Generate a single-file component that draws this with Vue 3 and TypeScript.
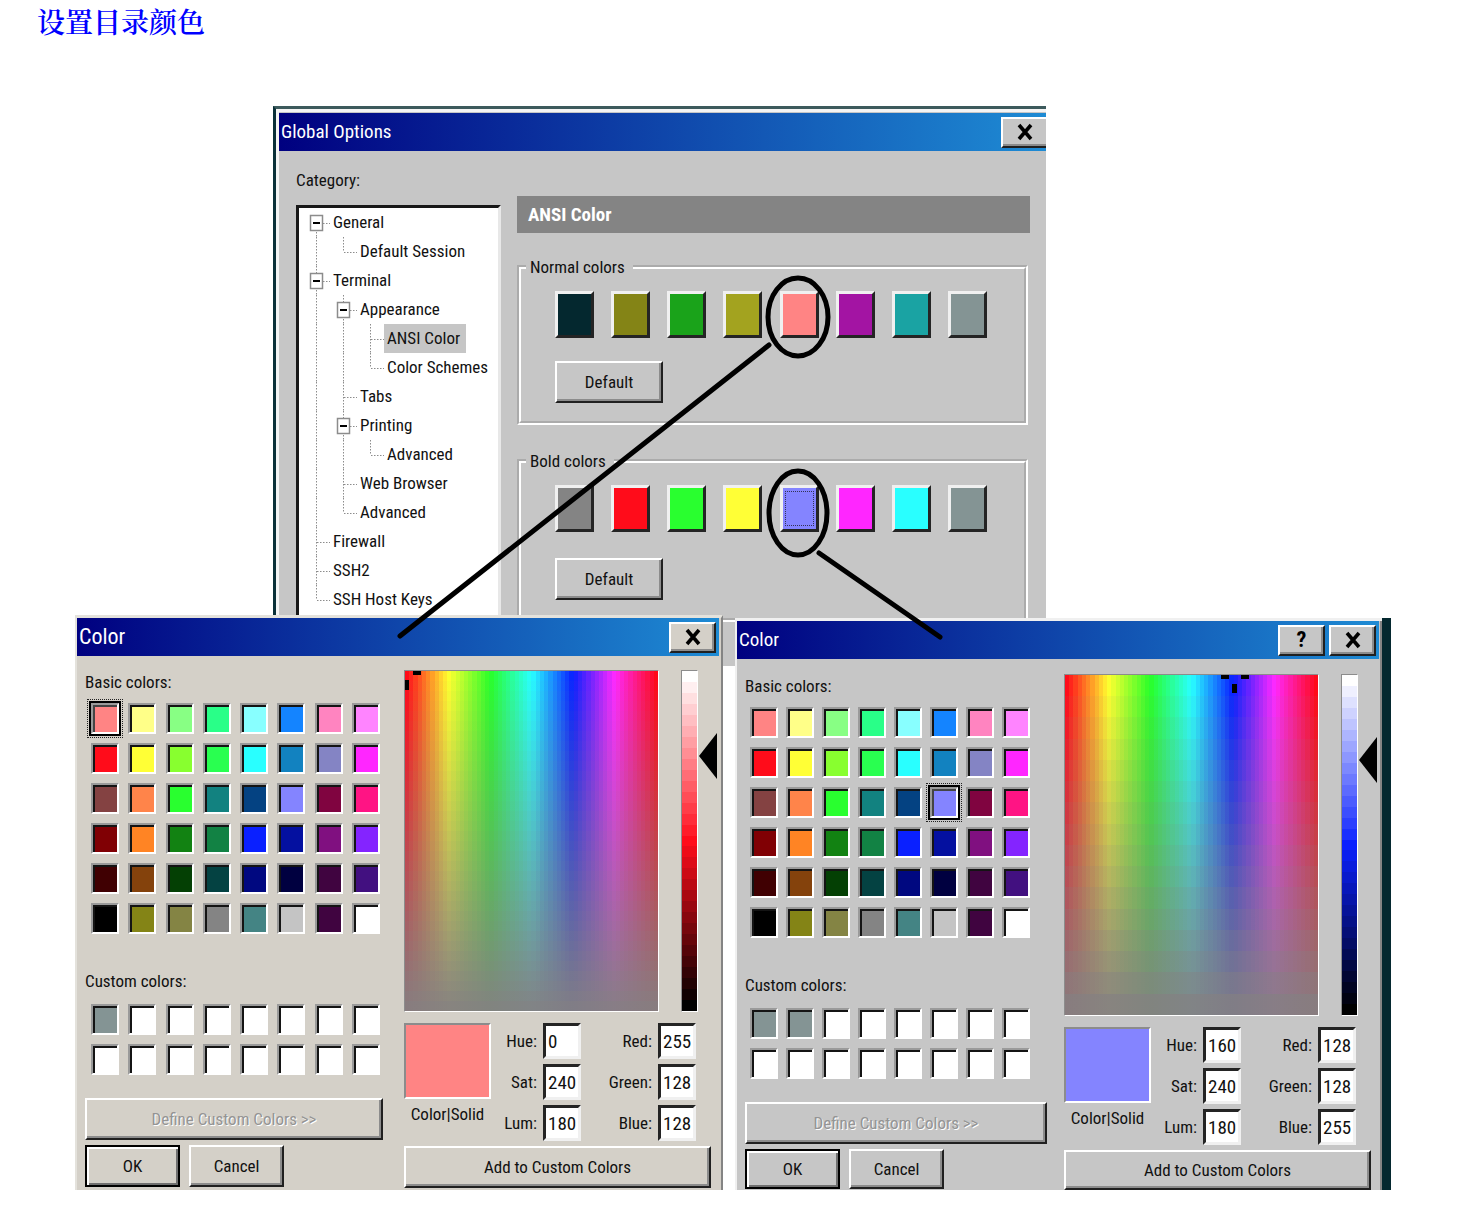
<script setup lang="ts">
import { reactive } from 'vue'

type Mark = { x: number; y: number; w: number; h: number }
type Field = { label: string; value: string }
interface Picker {
  id: string
  help: boolean
  selected: number
  custom: string[]
  color: string
  pure: string
  rows: number
  marks: Mark[]
  fields: Field[]
}
interface TreeRow {
  label: string
  cells: string[]
  selected?: boolean
}

// Cell letters: u = line up, d = line down, r = line to the label, b = expander box
const tree: TreeRow[] = [
  { label: 'General', cells: ['drb'] },
  { label: 'Default Session', cells: ['ud', 'ur'] },
  { label: 'Terminal', cells: ['udrb'] },
  { label: 'Appearance', cells: ['ud', 'udrb'] },
  { label: 'ANSI Color', cells: ['ud', 'ud', 'udr'], selected: true },
  { label: 'Color Schemes', cells: ['ud', 'ud', 'ur'] },
  { label: 'Tabs', cells: ['ud', 'udr'] },
  { label: 'Printing', cells: ['ud', 'udrb'] },
  { label: 'Advanced', cells: ['ud', 'ud', 'ur'] },
  { label: 'Web Browser', cells: ['ud', 'udr'] },
  { label: 'Advanced', cells: ['ud', 'ur'] },
  { label: 'Firewall', cells: ['udr'] },
  { label: 'SSH2', cells: ['udr'] },
  { label: 'SSH Host Keys', cells: ['ur'] },
]

const groups = [
  {
    title: 'Normal colors',
    focus: -1,
    colors: ['#04282f', '#848416', '#1aa31a', '#a3a31f', '#ff8484', '#a314a3', '#1aa3a3', '#849494'],
  },
  {
    title: 'Bold colors',
    focus: 4,
    colors: ['#848484', '#ff0c1a', '#29ff2f', '#ffff36', '#8484ff', '#ff26ff', '#29ffff', '#849494'],
  },
]

const basic = [
  '#ff8484', '#ffff88', '#88ff84', '#29ff88', '#88ffff', '#1484ff', '#ff84c0', '#ff84ff',
  '#ff0c1a', '#ffff36', '#88ff2f', '#29ff50', '#29ffff', '#1282c0', '#8484c4', '#ff26ff',
  '#844242', '#ff844a', '#29ff2f', '#128280', '#044282', '#8484ff', '#800440', '#ff1484',
  '#800004', '#ff8424', '#128212', '#128244', '#0a20ff', '#0410a0', '#801080', '#8424ff',
  '#400002', '#84420c', '#044004', '#044242', '#000880', '#000040', '#400440', '#421080',
  '#000000', '#848416', '#848444', '#848484', '#448484', '#c4c4c4', '#400440', '#ffffff',
]

const pickers = reactive<Picker[]>([
  {
    id: 'left',
    help: false,
    selected: 0,
    custom: ['#849494'],
    color: '#ff8484',
    pure: '#ff0c1a',
    rows: 34,
    marks: [
      { x: 8, y: 0, w: 8, h: 4 },
      { x: 0, y: 9, w: 4, h: 10 },
    ],
    fields: [
      { label: 'Hue:', value: '0' },
      { label: 'Red:', value: '255' },
      { label: 'Sat:', value: '240' },
      { label: 'Green:', value: '128' },
      { label: 'Lum:', value: '180' },
      { label: 'Blue:', value: '128' },
    ],
  },
  {
    id: 'right',
    help: true,
    selected: 21,
    custom: ['#849494', '#849494'],
    color: '#8484ff',
    pure: '#0a20ff',
    rows: 16,
    marks: [
      { x: 156, y: 0, w: 8, h: 4 },
      { x: 176, y: 0, w: 8, h: 4 },
      { x: 167, y: 9, w: 5, h: 9 },
    ],
    fields: [
      { label: 'Hue:', value: '160' },
      { label: 'Red:', value: '128' },
      { label: 'Sat:', value: '240' },
      { label: 'Green:', value: '128' },
      { label: 'Lum:', value: '180' },
      { label: 'Blue:', value: '255' },
    ],
  },
])

const hues = ['#ff0c1a', '#ffff30', '#29ff29', '#29ffff', '#0a20ff', '#ff29ff', '#ff0a1a']

function rgb(hex: string): number[] {
  return [1, 3, 5].map((i) => parseInt(hex.slice(i, i + 2), 16))
}

function mix(stops: string[], t: number): string {
  const pos = t * (stops.length - 1)
  const i = Math.min(Math.floor(pos), stops.length - 2)
  const a = rgb(stops[i])
  const b = rgb(stops[i + 1])
  return a.map((v, k) => Math.round(v + (b[k] - v) * (pos - i))).join(' ')
}

function bands(dir: string, count: number, paint: (t: number) => string): string {
  const parts: string[] = []
  for (let i = 0; i < count; i++) {
    parts.push(`${paint(i / (count - 1))} ${(i / count) * 100}% ${((i + 1) / count) * 100}%`)
  }
  return `linear-gradient(${dir}, ${parts.join(', ')})`
}

const hueBands = bands('to right', 60, (t) => `rgb(${mix(hues, t)})`)

function spectrum(rows: number): string {
  return `${bands('to bottom', rows, (t) => `rgb(132 128 130 / ${t * 0.97})`)}, ${hueBands}`
}

function lumBands(pure: string): string {
  return bands('to bottom', 31, (t) => `rgb(${mix(['#ffffff', pure, '#000000'], t)})`)
}
</script>

<template>
  <main class="page">
    <h1 class="heading">设置目录颜色</h1>

    <div class="stage">
      <section class="options" aria-label="Global Options">
        <header class="bar">
          <span class="bar-title">Global Options</span>
          <button class="raised tool" type="button" aria-label="Close">
            <svg width="16" height="18" viewBox="0 0 16 18"><path d="M2 2L14 16M14 2L2 16" stroke="#000" stroke-width="3.600" /></svg>
          </button>
        </header>
        <div class="options-body">
          <div class="category">
            <div id="category-label" class="text">Category:</div>
            <ul class="tree" role="tree" aria-labelledby="category-label">
              <li v-for="(row, i) in tree" :key="i" role="treeitem" :aria-level="row.cells.length" :aria-selected="!!row.selected">
                <svg v-for="(cell, c) in row.cells" :key="c" class="cell" width="27" height="29" viewBox="0 0 27 29">
                  <g fill="none" stroke="#8c8c8c" stroke-dasharray="1.5 1.5">
                    <path v-if="cell.includes('u')" d="M13.5 0V15" />
                    <path v-if="cell.includes('d')" d="M13.5 15V29" />
                    <path v-if="cell.includes('r')" d="M14 15.500H27" />
                  </g>
                  <g v-if="cell.includes('b')">
                    <rect x="7.500" y="7.500" width="12" height="15" fill="#fff" stroke="#8c8c8c" stroke-width="1.500" />
                    <path d="M10 15H17" stroke="#000" stroke-width="2" />
                  </g>
                </svg>
                <span class="node" :class="{ chosen: row.selected }">{{ row.label }}</span>
              </li>
            </ul>
          </div>
          <div class="panel">
            <h2 class="panel-title">ANSI Color</h2>
            <fieldset v-for="group in groups" :key="group.title" class="group">
              <legend>{{ group.title }}</legend>
              <div class="swatches">
                <button
                  v-for="(color, i) in group.colors"
                  :key="i"
                  type="button"
                  class="swatch"
                  :class="{ focus: group.focus === i }"
                  :style="{ backgroundColor: color }"
                  :aria-label="`${group.title} ${i + 1}`"
                ></button>
              </div>
              <button type="button" class="raised default">Default</button>
            </fieldset>
          </div>
        </div>
      </section>

      <section v-for="p in pickers" :key="p.id" class="picker" :class="p.id" aria-label="Color">
        <header class="bar">
          <span class="bar-title">Color</span>
          <button v-if="p.help" class="raised tool question" type="button" aria-label="Help">?</button>
          <button class="raised tool" type="button" aria-label="Close">
            <svg width="16" height="18" viewBox="0 0 16 18"><path d="M2 2L14 16M14 2L2 16" stroke="#000" stroke-width="3.600" /></svg>
          </button>
        </header>
        <div class="picker-body">
          <div class="choices">
            <div class="text">Basic colors:</div>
            <div class="grid basic">
              <button
                v-for="(color, i) in basic"
                :key="i"
                type="button"
                class="well"
                :class="{ picked: p.selected === i }"
                :style="{ backgroundColor: color }"
                :aria-label="`Basic color ${i + 1}`"
              ></button>
            </div>
            <div class="text">Custom colors:</div>
            <div class="grid custom">
              <button
                v-for="n in 16"
                :key="n"
                type="button"
                class="well"
                :style="{ backgroundColor: p.custom[n - 1] ?? '#ffffff' }"
                :aria-label="`Custom color ${n}`"
              ></button>
            </div>
            <button type="button" class="raised wide" disabled>Define Custom Colors &gt;&gt;</button>
            <div class="actions">
              <button type="button" class="raised ok">OK</button>
              <button type="button" class="raised">Cancel</button>
            </div>
          </div>
          <div class="mixer">
            <div class="scales">
              <div class="spectrum" :style="{ backgroundImage: spectrum(p.rows) }">
                <svg width="100%" height="100%">
                  <rect v-for="(m, i) in p.marks" :key="i" :x="m.x" :y="m.y" :width="m.w" :height="m.h" />
                </svg>
              </div>
              <div class="lum" :style="{ backgroundImage: lumBands(p.pure) }"></div>
              <svg class="arrow" width="20" height="48" viewBox="0 0 20 48"><path d="M1 24L19 1V47z" /></svg>
            </div>
            <div class="values">
              <div class="sample">
                <div class="solid" :style="{ backgroundColor: p.color }"></div>
                <div class="text">Color|Solid</div>
              </div>
              <div class="fields">
                <template v-for="f in p.fields" :key="f.label">
                  <label :for="`${p.id}-${f.label}`">{{ f.label }}</label>
                  <input :id="`${p.id}-${f.label}`" v-model="f.value" type="text" />
                </template>
              </div>
            </div>
            <button type="button" class="raised add">Add to Custom Colors</button>
          </div>
        </div>
      </section>

      <svg class="notes" viewBox="0 0 1316 1084" aria-hidden="true">
        <g fill="none" stroke="#000" stroke-width="5" stroke-linecap="round">
          <ellipse cx="723" cy="211" rx="30" ry="39" />
          <path d="M694 239L325 530" />
          <ellipse cx="723" cy="407" rx="29" ry="42" />
          <path d="M744 447L865 531" />
        </g>
      </svg>
    </div>
  </main>
</template>

<style>
body {
  margin: 0;
  background: #fff;
}
</style>

<style scoped>
* {
  box-sizing: border-box;
}
.page {
  padding: 0 85px 30px 75px;
  font-family: 'Liberation Sans Narrow', 'Arial Narrow', 'Roboto Condensed', 'Liberation Sans', sans-serif;
  font-size: 17px;
  line-height: 24px;
  color: #111;
}
.heading {
  margin: 0 0 0 -38px;
  height: 106px;
  font: 600 28px/42px 'Noto Serif CJK SC', 'Noto Sans CJK SC', serif;
  color: #00f;
}
button,
input {
  font: inherit;
  color: inherit;
  border-radius: 0;
  margin: 0;
  padding: 0;
}
.stage {
  position: relative;
  display: grid;
  grid-template-columns: 198fr 450fr 12fr 311fr 345fr;
  align-items: start;
}
.options {
  grid-area: 1 / 2 / 2 / 5;
  height: 560px;
  border-left: 3px solid #0a3038;
  border-top: 3px solid #3c5a5c;
  background: #c6c6c6;
  box-shadow: inset 3px 3px #f4f4f4;
  padding: 4px 0 0 3px;
  overflow: hidden;
}
.picker {
  grid-row: 1;
  background: #c6c6c6;
}
.left {
  grid-column: 1 / 3;
  margin-top: 509px;
  background: #d4d0c8;
  border: solid #e4e2dc;
  border-width: 3px 2px 0 2px;
  border-right-color: #848484;
}
.right {
  grid-column: 4 / 6;
  margin: 512px 9px 0 0;
  border: solid #f0f0f0;
  border-width: 3px 0 0 2px;
  box-shadow: 9px 0 #04282f, inset -2px 0 #848484;
}
.bar {
  display: flex;
  align-items: center;
  height: 38px;
  padding: 0 3px 0 2px;
  background: linear-gradient(to right, #000080, #1e8bd4);
  color: #fff;
}
.options .bar {
  padding-right: 0;
}
.left .bar {
  margin-right: 2px;
}
.right .bar {
  margin-right: 3px;
}
.bar-title {
  flex: 1;
  font-size: 19px;
}
.left .bar-title {
  font-size: 22px;
}
.raised {
  border: 2px solid;
  border-color: #fff #202020 #202020 #fff;
  box-shadow: inset -2px -2px #8c8c8c;
  background: #c6c6c6;
}
.left .raised {
  background: #d4d0c8;
}
.tool {
  display: flex;
  align-items: center;
  justify-content: center;
  width: 47px;
  height: 31px;
  color: #000;
}
.options .tool {
  width: 45px;
  border-right: 0;
  box-shadow: inset 0 -2px #8c8c8c;
}
.question {
  margin-right: 4px;
  font-weight: 700;
  font-size: 22px;
}
.options-body {
  display: flex;
  gap: 16px;
  padding: 17px 16px 0 17px;
}
.category {
  width: 205px;
}
.tree {
  list-style: none;
  margin: 13px 0 0;
  padding: 0 0 16px 4px;
  background: #fff;
  border: 3px solid;
  border-color: #181818 #e8e8e8 #e8e8e8 #181818;
}
.tree li {
  display: flex;
  align-items: center;
  height: 29px;
  white-space: nowrap;
}
.cell {
  flex: none;
}
.node {
  padding: 2px 6px 3px 3px;
}
.chosen {
  background: #c6c6c6;
}
.panel {
  flex: 1;
  padding-top: 28px;
}
.panel-title {
  margin: 0 0 20px;
  padding: 0 11px;
  background: #848484;
  color: #fff;
  font-size: 19px;
  font-weight: 700;
  line-height: 37px;
}
.group {
  margin: 0 2px 22px 0;
  padding: 10px 37px 18px 34px;
  border: 4px groove #fff;
  min-width: 0;
}
.group legend {
  margin-left: -29px;
  padding: 0 8px 0 4px;
  line-height: 28px;
}
.group + .group .default {
  margin-top: 26px;
}
.swatches {
  display: flex;
  justify-content: space-between;
}
.swatch {
  width: 39px;
  height: 47px;
  border: 3px solid;
  border-color: #f0f0f0 #242424 #242424 #f0f0f0;
}
.focus::after {
  content: '';
  display: block;
  height: 33px;
  margin: 0 2px;
  border: 1px dotted #333355;
}
.default {
  display: block;
  width: 108px;
  height: 42px;
  margin-top: 23px;
}
.picker-body {
  display: flex;
  gap: 21px;
  padding: 14px 3px 2px 8px;
}
.right .picker-body {
  padding-top: 15px;
  padding-bottom: 0;
  gap: 17px;
}
.choices {
  width: 298px;
}
.right .choices {
  width: 302px;
}
.text {
  white-space: nowrap;
}
.grid {
  display: grid;
  grid-template-columns: repeat(8, 28px);
  justify-content: space-between;
  row-gap: 10px;
}
.basic {
  margin: 9px 3px 36px 6px;
}
.custom {
  margin: 11px 3px 24px 6px;
}
.right .basic,
.right .custom {
  margin-left: 5px;
  margin-right: 17px;
}
.well {
  height: 31px;
  margin-bottom: -1px;
  border: 2px solid;
  border-color: #9a9a9a #fff #fff #9a9a9a;
  box-shadow: inset 2px 2px #141414;
}
.picked {
  box-shadow: inset 2px 2px #444, 0 0 0 2px #000;
  outline: 1px dotted #222;
  outline-offset: 3px;
}
.wide {
  display: block;
  width: 100%;
  height: 42px;
}
.wide:disabled {
  color: #949494;
  text-shadow: 1px 1px #fff;
}
.actions {
  display: flex;
  gap: 9px;
  margin-top: 5px;
}
.actions .raised {
  width: 95px;
  height: 42px;
}
.actions .ok {
  border-color: #000;
  box-shadow: inset 2px 2px #fff, inset -2px -2px #707070;
}
.mixer {
  width: 314px;
}
.scales {
  display: flex;
}
.spectrum {
  width: 255px;
  height: 342px;
  margin-right: 22px;
  border: 1px solid;
  border-color: #8c8c8c #fff #fff #8c8c8c;
}
.spectrum svg {
  display: block;
}
.lum {
  width: 17px;
  border: 1px solid;
  border-color: #8c8c8c #fff #fff #8c8c8c;
}
.arrow {
  margin-top: 62px;
}
.values {
  display: flex;
  margin-top: 11px;
}
.sample {
  width: 87px;
  text-align: center;
}
.solid {
  height: 76px;
  margin-bottom: 3px;
  border: 2px solid;
  border-color: #8c8c8c #fff #fff #8c8c8c;
}
.fields {
  display: grid;
  grid-template-columns: 46px 38px 65px 38px;
  grid-auto-rows: 36px;
  gap: 5px 6px;
  align-items: center;
  text-align: right;
}
.fields input {
  width: 100%;
  height: 36px;
  padding: 0 0 0 2px;
  background: #fff;
  border: 3px solid;
  border-color: #242424 #f0f0f0 #f0f0f0 #242424;
  outline: 0;
  font-size: 19px;
}
.add {
  display: block;
  width: 307px;
  height: 42px;
  margin-top: 5px;
}
.right .add,
.right .actions .raised {
  height: 40px;
}
.notes {
  position: absolute;
  inset: 0 0 auto;
  width: 100%;
  pointer-events: none;
}
</style>
